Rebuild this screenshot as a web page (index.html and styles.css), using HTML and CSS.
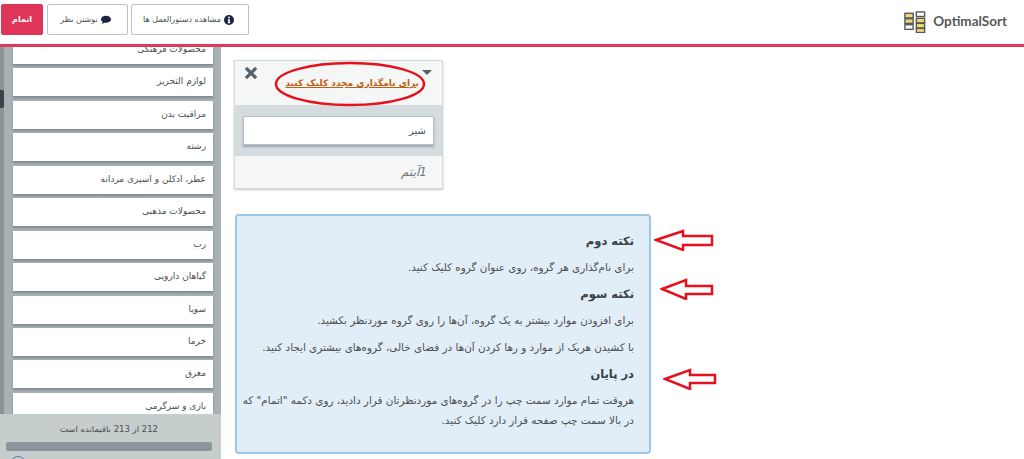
FILE: index.html
```html
<!DOCTYPE html>
<html lang="fa">
<head>
    <meta charset="UTF-8">
    <meta name="viewport" content="width=device-width, initial-scale=1.0">
    <title>OptimalSort</title>
    <link rel="stylesheet" href="styles.css">
</head>
<body>
    <header class="topbar">
        <div class="actions">
            <button class="btn btn-finish" dir="rtl">اتمام</button>
            <button class="btn btn-comment" dir="rtl">
                <svg class="icon" viewBox="0 0 14 12"><path d="M7 0C3.1 0 0 2.2 0 5c0 1.5.9 2.8 2.3 3.7-.2.9-.8 1.8-1.5 2.5 1.500-.1 2.900-.7 3.900-1.500.7.2 1.500.3 2.300.3 3.900 0 7-2.200 7-5S10.900 0 7 0z" fill="#1a2440"/></svg>
                نوشتن نظر
            </button>
            <button class="btn btn-help" dir="rtl">
                <svg class="icon" viewBox="0 0 12 12"><circle cx="6" cy="6" r="6" fill="#1a2440"/><rect x="5" y="2" width="2" height="2" fill="#fff"/><path d="M4.500 5H7v4h.8v1H4.300V9H5V6h-.5z" fill="#fff"/></svg>
                مشاهده دستورالعمل ها
            </button>
        </div>
        <div class="logo">
            <svg class="logo-mark" viewBox="0 0 24 24">
                <g stroke="#55585a" stroke-width="1.500">
                    <rect x="1" y="2.500" width="9" height="5" fill="#f2d774"/>
                    <rect x="1" y="8.500" width="9" height="5" fill="#f2d774"/>
                    <rect x="1" y="15" width="9" height="5" fill="#fff"/>
                    <rect x="13.500" y="1" width="9" height="5" fill="#fff"/>
                    <rect x="13.500" y="8" width="9" height="5" fill="#f2d774"/>
                    <rect x="13.500" y="13.500" width="9" height="5" fill="#f2d774"/>
                    <rect x="13.500" y="19" width="9" height="4.500" fill="#f2d774"/>
                </g>
            </svg>
            <span class="logo-text">OptimalSort</span>
        </div>
    </header>

    <main class="page">
        <aside class="sidebar">
            <span class="scroll-handle"></span>
            <ul class="items" dir="rtl">
                <li>محصولات فرهنگی</li>
                <li>لوازم التحریر</li>
                <li>مراقبت بدن</li>
                <li>رشته</li>
                <li>عطر، ادکلن و اسپری مردانه</li>
                <li>محصولات مذهبی</li>
                <li>رب</li>
                <li>گیاهان دارویی</li>
                <li>سویا</li>
                <li>خرما</li>
                <li>معرق</li>
                <li>بازی و سرگرمی</li>
            </ul>
            <div class="progress">
                <p class="progress-text" dir="rtl">212 از 213 باقیمانده است</p>
                <div class="progress-bar"></div>
                <span class="progress-circle"></span>
            </div>
        </aside>

        <section class="board">
            <div class="group">
                <div class="group-head">
                    <svg class="group-close" viewBox="0 0 12 12"><path d="M2 2l8 8M10 2l-8 8" stroke="#55626a" stroke-width="3.200" stroke-linecap="square"/></svg>
                    <a class="group-title" dir="rtl">برای نامگذاری مجدد کلیک کنید</a>
                    <span class="group-caret"></span>
                    <svg class="ellipse" viewBox="0 0 152 46"><ellipse cx="76" cy="23" rx="74" ry="21" fill="none" stroke="#e8101c" stroke-width="2.500"/></svg>
                </div>
                <div class="group-body">
                    <div class="group-card" dir="rtl">شیر</div>
                </div>
                <div class="group-foot" dir="rtl">1آیتم</div>
            </div>

            <div class="notes" dir="rtl">
                <h3 class="note-title">نکته دوم</h3>
                <p>برای نام‌گذاری هر گروه، روی عنوان گروه کلیک کنید.</p>
                <h3 class="note-title">نکته سوم</h3>
                <p>برای افزودن موارد بیشتر به یک گروه، آن‌ها را روی گروه موردنظر بکشید.</p>
                <p>با کشیدن هریک از موارد و رها کردن آن‌ها در فضای خالی، گروه‌های بیشتری ایجاد کنید.</p>
                <h3 class="note-title">در پایان</h3>
                <p>هروقت تمام موارد سمت چپ را در گروه‌های موردنظرتان قرار دادید، روی دکمه "اتمام" که در بالا سمت چپ صفحه قرار دارد کلیک کنید.</p>

                <svg class="arrow arrow-one" viewBox="0 0 60 22"><path d="M2 11L29 2v5h29v9H29v5z" fill="none" stroke="#e8101c" stroke-width="2.500"/></svg>
                <svg class="arrow arrow-two" viewBox="0 0 54 22"><path d="M2 11L26 2v6h26v8H26v5z" fill="none" stroke="#e8101c" stroke-width="2.500"/></svg>
                <svg class="arrow arrow-three" viewBox="0 0 54 22"><path d="M2 11L27 2v5h25v8H27v6z" fill="none" stroke="#e8101c" stroke-width="2.500"/></svg>
            </div>
        </section>
    </main>
</body>
</html>
```
FILE: styles.css
```css
* {
    box-sizing: border-box;
}
html, body {
    height: 100%;
}
body {
    margin: 0;
    display: flex;
    flex-direction: column;
    overflow: hidden;
    background: #fff;
    color: #4a4f52;
    font-family: "DejaVu Sans", sans-serif;
}
.topbar {
    height: 47px;
    flex: none;
    display: flex;
    justify-content: space-between;
    padding: 4px 17px 0 1px;
    border-bottom: 3px solid #de3a58;
}
.actions {
    display: flex;
    gap: 3px;
}
.btn {
    height: 31px;
    display: flex;
    align-items: center;
    justify-content: center;
    gap: 3px;
    padding: 0;
    background: #fff;
    border: 1px solid #b9c2c6;
    border-radius: 2px;
    color: #4a4f52;
    font-family: inherit;
    font-size: 8px;
}
.btn-finish {
    width: 42px;
    margin-right: 1px;
    background: #de3558;
    border-color: #de3558;
    color: #fff;
    font-weight: bold;
}
.btn-comment {
    width: 81px;
    padding-right: 4px;
}
.btn-help {
    width: 118px;
    padding-right: 3px;
}
.icon {
    width: 10px;
    height: 10px;
}
.logo {
    display: flex;
    align-items: flex-start;
    gap: 7px;
    padding-top: 7px;
}
.logo-mark {
    width: 22px;
    height: 22px;
}
.logo-text {
    margin-top: 2px;
    color: #55585a;
    font-family: Lato, sans-serif;
    font-size: 13.500px;
    font-weight: 700;
}
.page {
    flex: 1;
    min-height: 0;
    display: flex;
}
.sidebar {
    position: relative;
    width: 221px;
    flex: none;
    display: flex;
    flex-direction: column;
    background: #a7b1b5;
    border-left: 4px solid #8a9494;
}
.scroll-handle {
    position: absolute;
    left: -4px;
    top: 43px;
    width: 4px;
    height: 18px;
    border-radius: 0 2px 2px 0;
    background: #3c4245;
}
.items {
    flex: 1;
    min-height: 0;
    margin: 0;
    padding: 0 8px 0 9px;
    list-style: none;
    overflow: hidden;
}
.items li {
    height: 28px;
    flex: none;
    margin-bottom: 4.450px;
    padding-right: 7px;
    background: #fff;
    box-shadow: 0 2px 2px rgba(60, 70, 75, 0.35);
    font-size: 9px;
    line-height: 27px;
    white-space: nowrap;
}
.items li:first-child {
    height: 17px;
    line-height: 5px;
}
.progress {
    position: relative;
    height: 45px;
    flex: none;
    margin-left: -4px;
    padding: 8px 9px 0 6px;
    background: #c5cdcd;
}
.progress-text {
    margin: 0 0 5px;
    font-size: 8.500px;
    line-height: 15px;
    text-align: center;
}
.progress-bar {
    height: 9px;
    border-radius: 2px;
    background: #8b969c;
}
.progress-circle {
    position: absolute;
    left: 10px;
    top: 42px;
    width: 16px;
    height: 16px;
    border: 1px solid #4c7fa8;
    border-radius: 50%;
}
.board {
    flex: 1;
    padding: 13px 0 0 13px;
}
.group {
    width: 209px;
    border: 1px solid #d3dbdb;
    box-shadow: 0 1px 2px rgba(60, 70, 75, 0.3);
    background: #f5f7f7;
}
.group-head {
    position: relative;
    height: 44px;
}
.group-close {
    position: absolute;
    left: 10px;
    top: 6px;
    width: 12px;
    height: 12px;
}
.group-title {
    position: absolute;
    right: 23px;
    top: 17px;
    color: #c25e10;
    font-size: 9px;
    font-weight: bold;
    text-decoration: underline;
    white-space: nowrap;
}
.group-caret {
    position: absolute;
    right: 10px;
    top: 9px;
    border: 5px solid transparent;
    border-top-color: #55626a;
    border-bottom: 0;
}
.ellipse {
    position: absolute;
    left: 39px;
    top: 0;
    width: 152px;
    height: 46px;
}
.group-body {
    height: 51px;
    padding: 11px 8px 0 8px;
    background: #d4dcdf;
}
.group-card {
    height: 29px;
    padding-right: 7px;
    background: #fff;
    border: 1px solid #b9c2c6;
    box-shadow: 0 2px 2px rgba(60, 70, 75, 0.35);
    font-size: 10px;
    line-height: 27px;
}
.group-foot {
    height: 32px;
    padding-right: 15px;
    color: #6d7478;
    font-size: 12px;
    font-style: italic;
    line-height: 32px;
}
.notes {
    position: relative;
    width: 416px;
    height: 240px;
    margin: 25px 0 0 1px;
    padding: 16px 15px 0 5px;
    background: #e1edf7;
    border: 2px solid #9ec8ea;
    border-radius: 4px;
    font-size: 10.400px;
    line-height: 20px;
}
.notes p {
    margin: 0 0 7.500px;
}
.note-title {
    margin: 0 0 7px;
    color: #3a3f42;
    font-size: 11.500px;
    font-weight: bold;
    line-height: 18px;
}
.arrow {
    position: absolute;
    height: 22px;
}
.arrow-one {
    left: 417px;
    top: 13px;
    width: 60px;
}
.arrow-two {
    left: 423px;
    top: 62px;
    width: 54px;
}
.arrow-three {
    left: 426px;
    top: 152px;
    width: 54px;
}
```
